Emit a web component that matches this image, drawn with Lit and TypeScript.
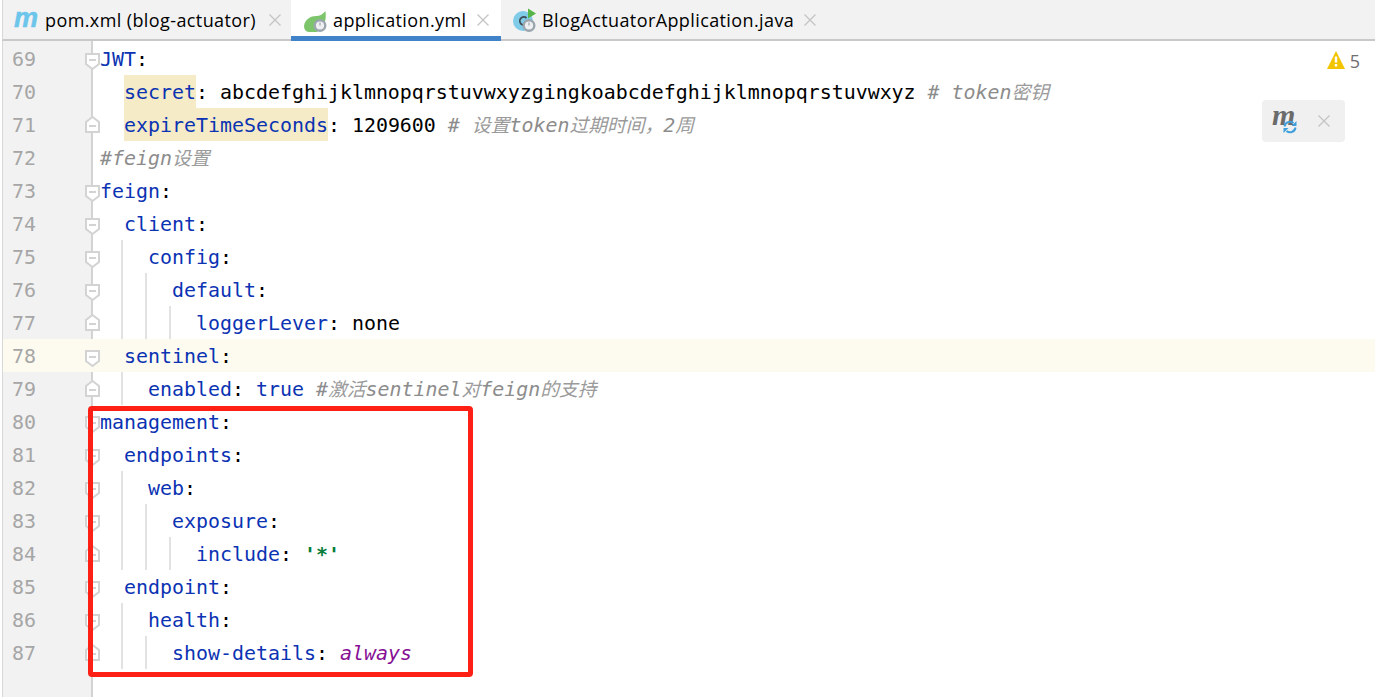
import { LitElement, html, css, svg, TemplateResult } from "lit";
import { customElement } from "lit/decorators.js";

type Seg = [string, string];
type Line = { n: number; level: number; fold?: "down" | "up"; segs: Seg[]; current?: boolean };

const K = "k", P = "p", H = "h", C = "c", B = "b", S = "s", A = "a";

const LINES: Line[] = [
  { n: 69, level: 0, fold: "down", segs: [[K, "JWT"], [P, ":"]] },
  { n: 70, level: 1, segs: [[H, "secret"], [P, ": abcdefghijklmnopqrstuvwxyzgingkoabcdefghijklmnopqrstuvwxyz "], [C, "# token密钥"]] },
  { n: 71, level: 1, fold: "up", segs: [[H, "expireTimeSeconds"], [P, ": 1209600 "], [C, "# 设置token过期时间，2周"]] },
  { n: 72, level: 0, segs: [[C, "#feign设置"]] },
  { n: 73, level: 0, fold: "down", segs: [[K, "feign"], [P, ":"]] },
  { n: 74, level: 1, fold: "down", segs: [[K, "client"], [P, ":"]] },
  { n: 75, level: 2, fold: "down", segs: [[K, "config"], [P, ":"]] },
  { n: 76, level: 3, fold: "down", segs: [[K, "default"], [P, ":"]] },
  { n: 77, level: 4, fold: "up", segs: [[K, "loggerLever"], [P, ": none"]] },
  { n: 78, level: 1, fold: "down", current: true, segs: [[K, "sentinel"], [P, ":"]] },
  { n: 79, level: 2, fold: "up", segs: [[K, "enabled"], [P, ": "], [B, "true"], [P, " "], [C, "#激活sentinel对feign的支持"]] },
  { n: 80, level: 0, fold: "down", segs: [[K, "management"], [P, ":"]] },
  { n: 81, level: 1, fold: "down", segs: [[K, "endpoints"], [P, ":"]] },
  { n: 82, level: 2, fold: "down", segs: [[K, "web"], [P, ":"]] },
  { n: 83, level: 3, fold: "down", segs: [[K, "exposure"], [P, ":"]] },
  { n: 84, level: 4, fold: "up", segs: [[K, "include"], [P, ": "], [S, "'*'"]] },
  { n: 85, level: 1, fold: "down", segs: [[K, "endpoint"], [P, ":"]] },
  { n: 86, level: 2, fold: "down", segs: [[K, "health"], [P, ":"]] },
  { n: 87, level: 3, fold: "up", segs: [[K, "show-details"], [P, ": "], [A, "always"]] },
];

const gear = (cx: number, cy: number, r: number) => svg`
  <circle cx=${cx} cy=${cy} r=${r} fill="#9aa5ad"/>
  <circle cx=${cx} cy=${cy} r=${r - 2.4} fill="#eef0f1"/>
  <path d="M${cx} ${cy - 3}v3" stroke="#9aa5ad" stroke-width="1.200"/>`;

const leafIcon = html`<svg class="ico" width="24" height="24" viewBox="0 0 24 24">
  <path d="M1 18C2 11 8 8 13 8c4 0 7-2 9.500-5 .5 5 .5 9-1.500 13l-7 8H6c-3 0-5-3-5-6z" fill="#7dc56b"/>
  ${gear(17, 17.5, 6.5)}
</svg>`;

const javaIcon = html`<svg class="ico" width="24" height="24" viewBox="0 0 24 24">
  <circle cx="10" cy="13" r="10" fill="#7fcbe8"/>
  <path d="M13.500 10a4 4 0 1 0 0 6" fill="none" stroke="#3f4a52" stroke-width="1.800"/>
  <path d="M15 .5v10l8-5z" fill="#55b548"/>
  ${gear(16, 17.5, 6.5)}
</svg>`;

const closeIcon = html`<svg class="x" width="12" height="12" viewBox="0 0 12 12">
  <path d="M.5.500l11 11M11.500.500l-11 11" stroke="#c4c4c4" stroke-width="1.300" fill="none"/>
</svg>`;

const foldDown = html`<svg class="fold down" width="15" height="17" viewBox="0 0 15 17">
  <path d="M1 1h13v10l-6.500 5L1 11z" fill="#fff" stroke="#d3d3d3" stroke-width="2"/>
  <path d="M4 7h7" stroke="#c4c4c4" stroke-width="1.500"/>
</svg>`;
const foldUp = html`<svg class="fold up" width="15" height="17" viewBox="0 0 15 17">
  <path d="M1 16h13V6L7.500 1 1 6z" fill="#fff" stroke="#d3d3d3" stroke-width="2"/>
  <path d="M4 10h7" stroke="#c4c4c4" stroke-width="1.500"/>
</svg>`;

@customElement("app-root")
export class AppRoot extends LitElement {
  static styles = css`
    :host { display: block; height: 697px; overflow: hidden; background: #fff; position: relative; }
    .root { display: flex; flex-direction: column; height: 100%; }
    .tabs {
      display: flex; height: 39px; flex: none; margin-left: 2px; padding-bottom: 0;
      background: #f2f2f2; border-left: 1px solid #d8d8d8; border-bottom: 2px solid #c9c9c9;
      font-family: "Open Sans", "Noto Sans", sans-serif; font-size: 18px; color: #000;
    }
    .tab { display: flex; align-items: center; height: 39px; box-sizing: border-box; position: relative; }
    .tab .label { white-space: nowrap; letter-spacing: 0.4px; }
    .tab.one { width: 288px; padding-left: 11px; }
    .tab.one .x { margin-left: 13px; }
    .tab.two { width: 210px; padding-left: 12px; background: #fff; }
    .tab.three { padding-left: 12px; }
    .tab.two::after {
      content: ""; position: absolute; left: 0; right: 0; bottom: -2px; height: 5px; background: #4083c9;
    }
    .mlogo {
      font: italic 700 27px/1 "Liberation Sans", sans-serif; color: #6cc5ea;
      width: 31px; margin-top: -2px; flex: none; -webkit-text-stroke: 0.5px #6cc5ea;
    }
    .ico { flex: none; margin-right: 6px; }
    .three .ico { margin-right: 5px; }
    .x { flex: none; margin-left: 10px; }
    .editor {
      flex: 1; padding-top: 1px; position: relative;
      background: linear-gradient(to right, #fff 2px, #d8d8d8 2px 3px, #f2f2f2 3px 91px, #d3d3d3 91px 93px, #fff 93px);
      font-family: "DejaVu Sans Mono", "Noto Sans CJK SC", monospace;
      font-size: 19.93px; color: #000;
    }
    .row { display: flex; height: 33px; line-height: 35px; white-space: pre; position: relative; }
    .row.current { background: linear-gradient(to right, #fff 2px, #d8d8d8 2px 3px, #fdfbf0 3px); }
    .num { width: 12px; flex: none; }
    .ln { width: 73px; flex: none; color: #a6a6a6; }
    .gut { width: 15px; flex: none; position: relative; }
    .fold { position: absolute; left: 0; }
    .fold.down { top: 11px; }
    .fold.up { top: 8px; }
    .ind { display: inline-block; width: 24px; flex: none; height: 33px; position: relative; }
    .ind.g::before {
      content: ""; position: absolute; left: -3px; top: 0; bottom: 0; width: 2px; background: #e2e2e2;
    }
    .k { color: #0b33b3; }
    .h { color: #0b33b3; background: #f5ebc6; display: inline-block; height: 33px; vertical-align: top; }
    .b { color: #0b33b3; }
    .p { color: #000; }
    .s { color: #067d3a; font-weight: 700; }
    .a { color: #871094; font-style: italic; }
    .c { color: #8c8c8c; font-style: italic; }
    .cjk { color: #9a9a9a; font-size: 18.8px; }
    .warn {
      position: absolute; right: 15px; top: 8px; display: flex; align-items: center; gap: 5px;
      font: 18px "Open Sans", sans-serif; color: #6e6e6e;
    }
    .warn svg { margin-top: -2px; }
    .float {
      position: absolute; left: 1262px; top: 59px; width: 83px; height: 42px; border-radius: 4px;
      background: #f0f0f0; display: flex; align-items: center; box-sizing: border-box; padding-left: 10px;
    }
    .float .mm {
      font: italic 700 30px/1 "Liberation Serif", serif; color: #6b6b6b; position: relative; top: -6px; width: 21px;
    }
    .float svg.sync { position: absolute; left: 21px; top: 20px; }
    .float .x { margin-left: 25px; }
    .mark {
      position: absolute; left: 88px; top: 365px; width: 385px; height: 271px; box-sizing: border-box;
      border: 5px solid #ff2015; border-radius: 4px; pointer-events: none;
    }
  `;

  private renderText(c: string, t: string) {
    if (c !== C) return html`<span class=${c}>${t}</span>`;
    const parts = t.split(/([\u3000-\u9fff\uff00-\uffef]+)/).filter(Boolean);
    return html`<span class="c">${parts.map((p) =>
      /[\u3000-\u9fff\uff00-\uffef]/.test(p) ? html`<span class="cjk">${p}</span>` : p
    )}</span>`;
  }

  private renderLine(l: Line): TemplateResult {
    const inds = [];
    for (let i = 0; i < l.level; i++) inds.push(html`<span class="ind ${i > 0 ? "g" : ""}"></span>`);
    return html`<div class="row ${l.current ? "current" : ""}">
      <span class="num"></span>
      <span class="ln">${l.n}</span>
      <span class="gut">${l.fold === "down" ? foldDown : l.fold === "up" ? foldUp : ""}</span>
      ${inds}
      <span>${l.segs.map(([c, t]) => this.renderText(c, t))}</span>
    </div>`;
  }

  render() {
    return html`<div class="root">
      <div class="tabs">
        <div class="tab one"><span class="mlogo">m</span><span class="label">pom.xml (blog-actuator)</span>${closeIcon}</div>
        <div class="tab two">${leafIcon}<span class="label">application.yml</span>${closeIcon}</div>
        <div class="tab three">${javaIcon}<span class="label">BlogActuatorApplication.java</span>${closeIcon}</div>
      </div>
      <div class="editor">
        ${LINES.map((l) => this.renderLine(l))}
        <div class="warn">
          <svg width="18" height="18" viewBox="0 0 18 18"><path d="M9 0l9 18H0z" fill="#f2c500"/><path d="M7.800 5.500h2.400v6H7.800zM7.800 13h2.400v2.500H7.800z" fill="#fff"/></svg>
          <span>5</span>
        </div>
        <div class="float">
          <span class="mm">m</span>
          <svg class="sync" width="14" height="14" viewBox="0 0 14 14"><path d="M1.500 6.500A5.500 5.500 0 0 1 10.500 3M12.500 7.500A5.500 5.500 0 0 1 3.500 11" fill="none" stroke="#3f9fdc" stroke-width="2"/><path d="M13.500 1v5h-5zM.5 13V8h5z" fill="#3f9fdc"/></svg>
          ${closeIcon}
        </div>
        <div class="mark"></div>
      </div>
    </div>`;
  }
}
